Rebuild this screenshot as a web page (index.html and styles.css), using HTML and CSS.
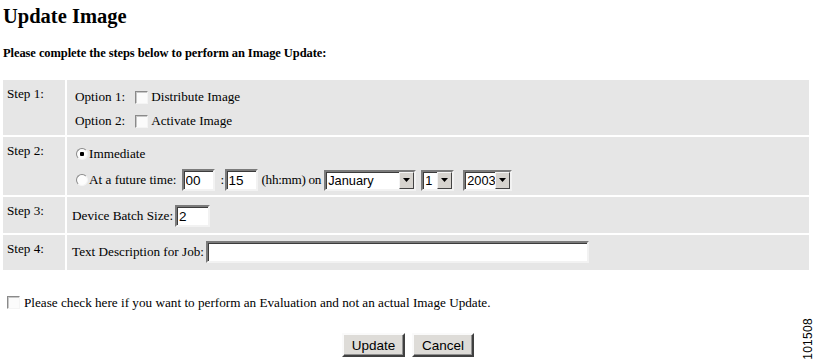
FILE: index.html
```html
<!DOCTYPE html>
<html>
<head>
<meta charset="utf-8">
<title>Update Image</title>
<link rel="stylesheet" href="styles.css">
</head>
<body>
<h1 class="title">Update Image</h1>
<p class="intro">Please complete the steps below to perform an Image Update:</p>

<div class="steps">
  <div class="label">Step 1:</div>
  <div class="cell cell-1">
    <div class="line"><span class="opt">Option 1:</span><input type="checkbox" class="chk"><span>Distribute Image</span></div>
    <div class="line"><span class="opt">Option 2:</span><input type="checkbox" class="chk"><span>Activate Image</span></div>
  </div>

  <div class="label">Step 2:</div>
  <div class="cell cell-2">
    <div class="line"><input type="radio" name="when" class="rad" checked><span>Immediate</span></div>
    <div class="line">
      <input type="radio" name="when" class="rad"><span>At a future time:</span>
      <input type="text" class="txt w-hh" value="00">
      <span class="colon">:</span>
      <input type="text" class="txt w-mm" value="15">
      <span class="hint">(hh:mm) on</span>
      <span class="sel w-month"><select><option>January</option></select><span class="arrow"><svg width="9" height="5" viewBox="0 0 9 5"><path d="M1 0h7L4.5 4z" fill="#000"/></svg></span></span>
      <span class="sel w-day"><select><option>1</option></select><span class="arrow"><svg width="9" height="5" viewBox="0 0 9 5"><path d="M1 0h7L4.5 4z" fill="#000"/></svg></span></span>
      <span class="sel w-year"><select><option>2003</option></select><span class="arrow"><svg width="9" height="5" viewBox="0 0 9 5"><path d="M1 0h7L4.5 4z" fill="#000"/></svg></span></span>
    </div>
  </div>

  <div class="label">Step 3:</div>
  <div class="cell cell-3">
    <div class="line"><span>Device Batch Size:</span><input type="text" class="txt w-batch" value="2"></div>
  </div>

  <div class="label">Step 4:</div>
  <div class="cell cell-4">
    <div class="line"><span>Text Description for Job:</span><input type="text" class="txt w-desc" value=""></div>
  </div>
</div>

<div class="eval"><input type="checkbox" class="chk"><span>Please check here if you want to perform an Evaluation and not an actual Image Update.</span></div>

<div class="actions">
  <button class="btn w-update">Update</button>
  <button class="btn w-cancel">Cancel</button>
</div>

<div class="figid">101508</div>
</body>
</html>
```

FILE: styles.css
```css
html, body {
  margin: 0;
  padding: 0;
  background: #fff;
}
body {
  position: relative;
  width: 815px;
  height: 363px;
  overflow: hidden;
  box-sizing: border-box;
  padding: 0 6px 0 3px;
  font-family: "Liberation Serif", "Times New Roman", serif;
  font-size: 13.2px;
  color: #000;
}
.title {
  margin: 4px 0 0 0;
  font-size: 20.5px;
  line-height: 24px;
  font-weight: bold;
}
.intro {
  margin: 18px 0 0 0;
  font-size: 12.5px;
  line-height: 15px;
  font-weight: bold;
  letter-spacing: -0.08px;
}
.steps {
  margin-top: 19px;
  display: grid;
  grid-template-columns: 62px 1fr;
  grid-template-rows: 55px 58px 36px 35px;
  gap: 2px;
}
.label, .cell {
  background: #e6e6e6;
}
.label {
  padding: 6px 0 0 4px;
  line-height: 15px;
}
.cell {
  display: flex;
  flex-direction: column;
  padding-left: 5px;
}
.line {
  display: flex;
  align-items: center;
  height: 22px;
  white-space: nowrap;
}
.cell-1 { padding-top: 6px; gap: 2px; padding-left: 8px; }
.cell-2 { padding-top: 6px; gap: 4px; padding-left: 9px; }
.cell-3 { padding-top: 8px; }
.cell-4 { padding-top: 6px; }
.opt { margin-right: 10px; }

.chk {
  appearance: none;
  -webkit-appearance: none;
  margin: 0 3px 0 0;
  width: 13px;
  height: 13px;
  box-sizing: border-box;
  border: 1px solid;
  border-color: #8a8a8a #f4f4f4 #f4f4f4 #8a8a8a;
  box-shadow: inset 1px 1px 0 #c8c8c8;
  background: #fbfbfb;
}
.rad {
  appearance: none;
  -webkit-appearance: none;
  margin: 0 1px 0 0;
  width: 12px;
  height: 12px;
  box-sizing: border-box;
  border-radius: 50%;
  border: 1px solid;
  border-color: #8a8a8a #f4f4f4 #f4f4f4 #8a8a8a;
  background: #fdfdfd;
}
.rad:checked {
  background: radial-gradient(circle, #000 0 2px, #fdfdfd 2.5px);
}
.txt {
  box-sizing: border-box;
  height: 22px;
  margin: 0;
  padding: 1px 2px 0 2px;
  border: 2px solid;
  border-color: #7b7b7b #f2f2f2 #f2f2f2 #7b7b7b;
  box-shadow: inset 1px 1px 0 #3c3c3c;
  background: #fff;
  font-family: "Liberation Sans", Arial, sans-serif;
  font-size: 13.5px;
  color: #000;
  outline: none;
}
.w-hh { width: 33px; margin-left: 5px; }
.colon { margin: 0 0 0 6px; width: 4px; }
.w-mm { width: 33px; }
.hint { margin-left: 4px; letter-spacing: -0.3px; }
.w-batch { width: 35px; margin-left: 2px; }
.w-desc { width: 383px; margin-left: 2px; }

.sel {
  position: relative;
  display: inline-block;
  height: 21px;
  margin-left: 4px;
}
.sel select {
  appearance: none;
  -webkit-appearance: none;
  box-sizing: border-box;
  height: 21px;
  width: 100%;
  margin: 0;
  padding: 0 0 0 2px;
  border: 2px solid;
  border-color: #7b7b7b #f2f2f2 #f2f2f2 #7b7b7b;
  box-shadow: inset 1px 1px 0 #3c3c3c;
  background: #fff;
  font-family: "Liberation Sans", Arial, sans-serif;
  font-size: 12.8px;
  color: #000;
  border-radius: 0;
  outline: none;
}
.sel .arrow {
  position: absolute;
  top: 2px;
  right: 2px;
  width: 15px;
  height: 17px;
  box-sizing: border-box;
  background: #d6d3ce;
  border: 1px solid;
  border-color: #f4f4f4 #444 #444 #f4f4f4;
  display: flex;
  align-items: center;
  justify-content: center;
}
.w-month { width: 92px; margin-left: 3px; }
.w-day { width: 33px; margin-left: 5px; }
.w-year { width: 49px; margin-left: 9px; }

.eval {
  display: flex;
  align-items: center;
  margin-top: 25px;
  padding-left: 4px;
  line-height: 15px;
}
.eval .chk { margin-right: 4px; }

.actions {
  display: flex;
  justify-content: center;
  gap: 7px;
  margin-top: 23px;
  padding-left: 4px;
}
.btn {
  box-sizing: border-box;
  height: 24px;
  margin: 0;
  padding: 0;
  border: 2px solid;
  border-color: #fafafa #404040 #404040 #fafafa;
  box-shadow: inset -1px -1px 0 #909090;
  background: #dedcd8;
  font-family: "Liberation Sans", Arial, sans-serif;
  font-size: 13.5px;
  color: #000;
}
.w-update { width: 63px; }
.w-cancel { width: 62px; }

.figid {
  position: absolute;
  right: 1px;
  bottom: 3px;
  writing-mode: vertical-rl;
  transform: rotate(180deg);
  font-family: "Liberation Sans", Arial, sans-serif;
  font-size: 12px;
  line-height: 12px;
  letter-spacing: 0.3px;
  color: #000;
}
```
